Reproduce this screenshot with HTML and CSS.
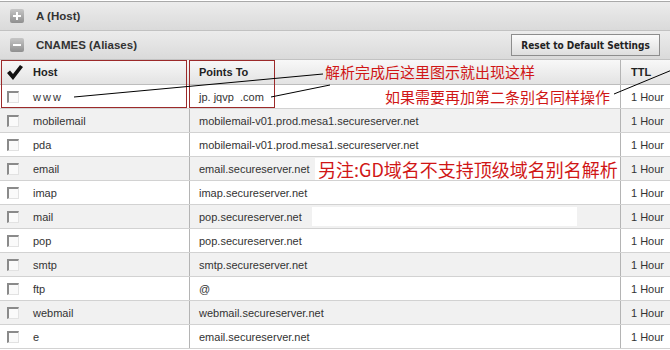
FILE: index.html
```html
<!DOCTYPE html>
<html lang="zh">

<head>
    <meta charset="UTF-8">
    <title>CNAMES (Aliases)</title>
    <link rel="stylesheet" href="styles.css">
</head>

<body>
    <div class="page">
        <div class="group group-first">
            <span class="toggle">
                <svg width="14" height="14" viewBox="0 0 14 14"><path d="M3 7h8M7 3v8" stroke="#fff" stroke-width="2"/></svg>
            </span>
            <span class="group-title">A (Host)</span>
        </div>
        <div class="group">
            <span class="toggle">
                <svg width="14" height="14" viewBox="0 0 14 14"><path d="M3 7h8" stroke="#fff" stroke-width="2"/></svg>
            </span>
            <span class="group-title">CNAMES (Aliases)</span>
            <button class="reset-btn">Reset to Default Settings</button>
        </div>

        <div class="records">
            <div class="rec-row rec-head">
                <div class="cell cell-check">
                    <svg width="16" height="15" viewBox="0 0 16 15"><path d="M0 8 L3 5.5 L6 9 L13 0 L16 2 L6 15 Z" fill="#111"/></svg>
                </div>
                <div class="cell cell-host">Host</div>
                <div class="cell cell-points">Points To</div>
                <div class="cell cell-ttl">TTL</div>
            </div>

            <div class="rec-row">
                <div class="cell cell-check"><span class="box"></span></div>
                <div class="cell cell-host host-www">www</div>
                <div class="cell cell-points">jp. jqvp&nbsp;&nbsp;.com</div>
                <div class="cell cell-ttl">1 Hour</div>
            </div>
            <div class="rec-row alt">
                <div class="cell cell-check"><span class="box"></span></div>
                <div class="cell cell-host">mobilemail</div>
                <div class="cell cell-points">mobilemail-v01.prod.mesa1.secureserver.net</div>
                <div class="cell cell-ttl">1 Hour</div>
            </div>
            <div class="rec-row">
                <div class="cell cell-check"><span class="box"></span></div>
                <div class="cell cell-host">pda</div>
                <div class="cell cell-points">mobilemail-v01.prod.mesa1.secureserver.net</div>
                <div class="cell cell-ttl">1 Hour</div>
            </div>
            <div class="rec-row alt">
                <div class="cell cell-check"><span class="box"></span></div>
                <div class="cell cell-host">email</div>
                <div class="cell cell-points">email.secureserver.net</div>
                <div class="cell cell-ttl">1 Hour</div>
            </div>
            <div class="rec-row">
                <div class="cell cell-check"><span class="box"></span></div>
                <div class="cell cell-host">imap</div>
                <div class="cell cell-points">imap.secureserver.net</div>
                <div class="cell cell-ttl">1 Hour</div>
            </div>
            <div class="rec-row alt">
                <div class="cell cell-check"><span class="box"></span></div>
                <div class="cell cell-host">mail</div>
                <div class="cell cell-points">pop.secureserver.net</div>
                <div class="cell cell-ttl">1 Hour</div>
            </div>
            <div class="rec-row">
                <div class="cell cell-check"><span class="box"></span></div>
                <div class="cell cell-host">pop</div>
                <div class="cell cell-points">pop.secureserver.net</div>
                <div class="cell cell-ttl">1 Hour</div>
            </div>
            <div class="rec-row alt">
                <div class="cell cell-check"><span class="box"></span></div>
                <div class="cell cell-host">smtp</div>
                <div class="cell cell-points">smtp.secureserver.net</div>
                <div class="cell cell-ttl">1 Hour</div>
            </div>
            <div class="rec-row">
                <div class="cell cell-check"><span class="box"></span></div>
                <div class="cell cell-host">ftp</div>
                <div class="cell cell-points">@</div>
                <div class="cell cell-ttl">1 Hour</div>
            </div>
            <div class="rec-row alt">
                <div class="cell cell-check"><span class="box"></span></div>
                <div class="cell cell-host">webmail</div>
                <div class="cell cell-points">webmail.secureserver.net</div>
                <div class="cell cell-ttl">1 Hour</div>
            </div>
            <div class="rec-row">
                <div class="cell cell-check"><span class="box"></span></div>
                <div class="cell cell-host">e</div>
                <div class="cell cell-points">email.secureserver.net</div>
                <div class="cell cell-ttl">1 Hour</div>
            </div>
        </div>

        <!-- anotaciones encima de la captura -->
        <div class="mark-box mark-host"></div>
        <div class="mark-box mark-points"></div>
        <div class="blank-patch"></div>

        <svg class="pointers" width="670" height="350" viewBox="0 0 670 350">
            <line x1="74" y1="97" x2="323" y2="74" stroke="#000" stroke-width="1"/>
            <line x1="271" y1="97" x2="330" y2="85" stroke="#000" stroke-width="1"/>
            <line x1="614" y1="94" x2="672" y2="70" stroke="#000" stroke-width="1"/>
        </svg>

        <p class="note note-done">解析完成后这里图示就出现这样</p>
        <p class="note note-more">如果需要再加第二条别名同样操作</p>
        <p class="note note-warn">另注:GD域名不支持顶级域名别名解析</p>
    </div>
</body>

</html>
```

FILE: styles.css
```css
body {
    margin: 0;
    background-color: #fff;
    font-family: "Liberation Sans", Arial, sans-serif;
    color: #333;
    overflow: hidden;
}

.page {
    position: relative;
    width: 670px;
    height: 350px;
    overflow: hidden;
    padding-top: 1px;
    box-sizing: border-box;
}

/* Cabeceras de grupo (A / CNAMES) */
.group {
    display: flex;
    align-items: center;
    height: 29px;
    padding-left: 10px;
    padding-right: 10px;
    background: linear-gradient(#ececec, #dadada);
    border-bottom: 1px solid #c2c2c2;
    box-sizing: border-box;
}

.group-first {
    height: 30px;
    border-top: 1px solid #a9a9a9;
}

.toggle {
    display: flex;
    width: 14px;
    height: 14px;
    border-radius: 2px;
    background: linear-gradient(#c6c6c6, #8f8f8f);
}

.group-title {
    margin-left: 12px;
    font-size: 11.5px;
    font-weight: bold;
    color: #333;
}

.reset-btn {
    margin-left: auto;
    width: 149px;
    height: 22px;
    padding: 0;
    border: 1px solid #8d8d8d;
    background: linear-gradient(#fbfbfb, #dedede);
    font-family: "DejaVu Sans Condensed", "DejaVu Sans", sans-serif;
    font-size: 10px;
    font-weight: bold;
    color: #222;
}

/* Tabla de registros */
.records {
    width: 680px;
}

.rec-row {
    display: grid;
    grid-template-columns: 25px 164px 431px 60px;
    height: 24px;
    border-bottom: 1px solid #d2d2d2;
    box-sizing: border-box;
    font-size: 11px;
}

.rec-row.alt {
    background-color: #f1f1f1;
}

.rec-head {
    height: 25px;
    background: linear-gradient(#f8f8f8, #e3e3e3);
    border-bottom: 1px solid #bdbdbd;
    font-size: 11px;
    font-weight: bold;
    color: #222;
}

.cell {
    display: flex;
    align-items: center;
    white-space: nowrap;
}

.cell-check {
    padding-left: 7px;
}

.cell-host {
    padding-left: 8px;
}

.host-www {
    letter-spacing: 2px;
}

.cell-points {
    border-left: 1px solid #b4b4b4;
    padding-left: 9px;
}

.cell-ttl {
    border-left: 1px solid #b4b4b4;
    padding-left: 10px;
}

.box {
    width: 9px;
    height: 9px;
    border-top: 2px solid #8a8a8a;
    border-left: 2px solid #8a8a8a;
    border-right: 1px solid #e2e2e2;
    border-bottom: 1px solid #e2e2e2;
    background-color: #fafafa;
}

/* Anotaciones */
.mark-box {
    position: absolute;
    top: 60px;
    height: 48px;
    border: 1px solid #9c2a2a;
    box-sizing: border-box;
}

.mark-host {
    left: 1px;
    width: 186px;
}

.mark-points {
    left: 189px;
    width: 86px;
}

.blank-patch {
    position: absolute;
    left: 312px;
    top: 207px;
    width: 265px;
    height: 19px;
    background-color: #fff;
}

.pointers {
    position: absolute;
    left: 0;
    top: 0;
}

.note {
    position: absolute;
    margin: 0;
    color: #d01616;
    font-family: "Noto Sans CJK SC", sans-serif;
    white-space: nowrap;
}

.note-done {
    left: 325px;
    top: 62px;
    font-size: 15px;
    line-height: 20px;
}

.note-more {
    left: 385px;
    top: 87px;
    font-size: 15px;
    line-height: 20px;
}

.note-warn {
    left: 315px;
    top: 158px;
    width: 305px;
    padding-left: 3px;
    box-sizing: border-box;
    font-size: 18px;
    line-height: 22px;
    background-color: #fff;
}
```
